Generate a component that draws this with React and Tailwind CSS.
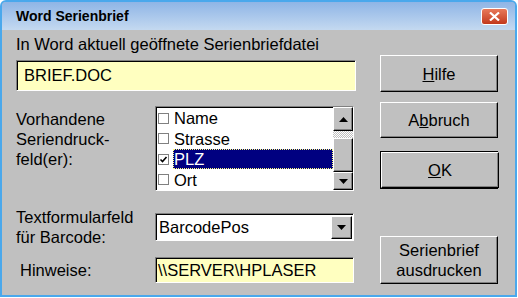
import React from 'react';

const raised =
  'bg-[#c0c0c0] border border-t-white border-l-white border-r-black border-b-black shadow-[inset_-1px_-1px_0_#808080]';
const sunken =
  'border border-t-[#808080] border-l-[#808080] border-r-white border-b-white shadow-[inset_1px_1px_0_#000]';

const CheckBox = ({ checked }) => (
  <svg width="11" height="11" viewBox="0 0 11 11" className="shrink-0">
    <rect x="0.5" y="0.5" width="10" height="10" fill="#fff" stroke="#808080" />
    {checked && <path d="M2.5 5.5 L4.5 7.5 L8.5 3" stroke="#000" strokeWidth="1.6" fill="none" />}
  </svg>
);

const Arrow = ({ down }) => (
  <svg width="9" height="5" viewBox="0 0 9 5">
    {down ? <path d="M0 0 H9 L4.5 5 Z" fill="#000" /> : <path d="M0 5 H9 L4.5 0 Z" fill="#000" />}
  </svg>
);

const fields = [
  { name: 'Name', checked: false },
  { name: 'Strasse', checked: false },
  { name: 'PLZ', checked: true, selected: true },
  { name: 'Ort', checked: false },
];

const Button = ({ children, className = '' }) => (
  <button className={`w-[118px] flex flex-col items-center justify-center text-[16.5px] leading-[20px] text-black ${raised} ${className}`}>
    {children}
  </button>
);

export default function App() {
  return (
    <div className="w-[518px] h-[298px] bg-white font-['Liberation_Sans',Arial,sans-serif] text-[16.5px] text-black">
      <div className="w-[517px] h-[297px] flex flex-col border-2 border-[#4aa8ec] rounded-t-[6px] bg-[#c0c0c0] overflow-hidden">
        <div className="h-[28px] shrink-0 flex items-center justify-between pl-[14px] pr-[7px] bg-gradient-to-b from-[#8fb5e6] to-[#c4d9f0]">
          <span className="font-bold text-[14px]">Word Serienbrief</span>
          <div className="w-[27px] h-[17px] rounded-[3px] border border-white bg-gradient-to-b from-[#e8795a] to-[#c2381c] flex items-center justify-center">
            <svg width="11" height="9" viewBox="0 0 11 9">
              <path d="M1 0.5 L10 8.5 M10 0.5 L1 8.5" stroke="#fff" strokeWidth="2.2" />
            </svg>
          </div>
        </div>

        <div className="flex pl-[14px]">
          <div className="w-[340px] flex flex-col">
            <div className="mt-[5px] leading-[18px]">In Word aktuell geöffnete Serienbriefdatei</div>
            <div className={`mt-[7px] h-[31px] bg-[#ffffc0] flex items-center pl-[7px] ${sunken}`}>BRIEF.DOC</div>

            <div className="mt-[15px] flex">
              <div className="w-[139px] pt-[3px] leading-[20px]">
                <div>Vorhandene</div>
                <div>Seriendruck-</div>
                <div>feld(er):</div>
              </div>
              <div className={`w-[199px] h-[85px] bg-white flex ${sunken}`}>
                <div className="flex-1 flex flex-col pl-[2px] pt-[1px]">
                  {fields.map((f) => (
                    <div key={f.name} className="h-[21px] flex items-center gap-[4px]">
                      <CheckBox checked={f.checked} />
                      <span
                        className={`flex-1 h-[20px] leading-[20px] pl-[1px] ${
                          f.selected ? 'bg-[#000080] text-white outline-1 outline-dotted outline-[#ffff80] -outline-offset-1' : ''
                        }`}
                      >
                        {f.name}
                      </span>
                    </div>
                  ))}
                </div>
                <div className="w-[20px] flex flex-col">
                  <div className={`h-[24px] flex items-center justify-center ${raised}`}>
                    <Arrow />
                  </div>
                  <div className="h-[7px] bg-[repeating-conic-gradient(#c0c0c0_0_25%,#fff_0_50%)] bg-[length:2px_2px]" />
                  <div className={`h-[34px] ${raised}`} />
                  <div className={`flex-1 flex items-center justify-center ${raised}`}>
                    <Arrow down />
                  </div>
                </div>
              </div>
            </div>

            <div className="mt-[16px] flex items-center">
              <div className="w-[139px] leading-[20px]">
                <div>Textformularfeld</div>
                <div>für Barcode:</div>
              </div>
              <div className={`w-[199px] h-[28px] bg-white flex items-center ${sunken}`}>
                <span className="flex-1 pl-[3px]">BarcodePos</span>
                <div className={`w-[21px] h-[23px] mr-[1px] flex items-center justify-center ${raised}`}>
                  <Arrow down />
                </div>
              </div>
            </div>

            <div className="mt-[10px] flex items-center">
              <div className="w-[139px] pl-[4px]">Hinweise:</div>
              <div className={`w-[199px] h-[26px] bg-[#ffffc0] flex items-center pl-[2px] ${sunken}`}>
                \\SERVER\HPLASER
              </div>
            </div>
          </div>

          <div className="ml-[24px] w-[118px] flex flex-col">
            <Button className="mt-[25px] h-[37px]">
              <span><u>H</u>ilfe</span>
            </Button>
            <Button className="mt-[10px] h-[36px]">
              <span>A<u>b</u>bruch</span>
            </Button>
            <div className="mt-[13px] border border-black">
              <Button className="w-[117px] h-[36px]">
                <span><u>O</u>K</span>
              </Button>
            </div>
            <Button className="mt-[47px] h-[48px]">
              <span>Serienbrief</span>
              <span>ausdrucken</span>
            </Button>
          </div>
        </div>
      </div>
    </div>
  );
}
